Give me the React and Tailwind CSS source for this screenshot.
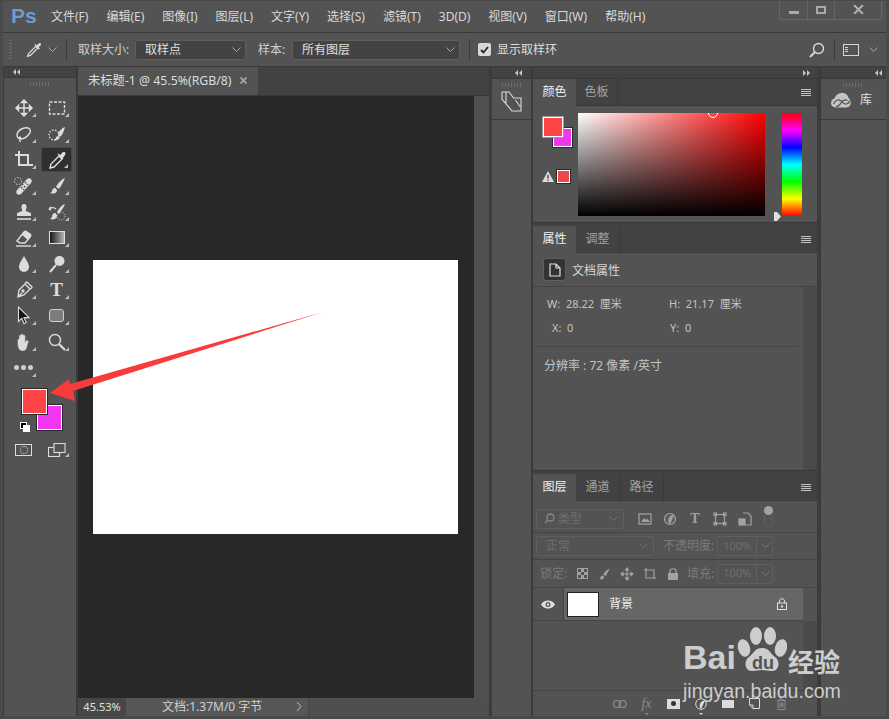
import React from 'react';

const Corner = () => (
  <span className="absolute right-[3px] bottom-[3px] w-0 h-0 border-l-[4px] border-l-transparent border-b-[4px] border-b-[#bdbdbd]" />
);

const Svg = ({ children, size = 20, className = '' }) => (
  <svg width={size} height={size} viewBox="0 0 20 20" fill="none" stroke="#dcdcdc" strokeWidth="1.4" className={className}>
    {children}
  </svg>
);

const Dropper = ({ size = 20 }) => (
  <Svg size={size}>
    <path d="M3 17l1-3 8-8 2 2-8 8z" />
    <path d="M11 4l5 5M13 6l2.5-2.5c1-1 2-.2 1.3.8L14 7z" fill="#dcdcdc" strokeWidth="1.6" />
  </Svg>
);

const tools = [
  [
    <Svg key="m"><path d="M10 2v16M2 10h16M10 2L7.5 4.5h5zM10 18l-2.5-2.5h5zM2 10l2.5-2.5v5zM18 10l-2.5-2.5v5z" fill="#dcdcdc" strokeWidth="1.5" /></Svg>,
    <Svg key="r"><rect x="2.5" y="4" width="15" height="12" strokeDasharray="3 1.5" /></Svg>,
  ],
  [
    <Svg key="l"><path d="M6 15c-3-1-4-4-2-7 2-3 7-5 10-4 3 1 3 4 1 6-2 3-6 5-9 5zM6 15c-1 1 0 2 .5 3M5 13c1 0 2 .5 2 2" /></Svg>,
    <Svg key="q"><circle cx="7" cy="11" r="5" strokeDasharray="1.5 1.5" /><path d="M18 3c-3 1-6 4-7 7 0 2 2 3 3 2 2-2 3-6 4-9z" fill="#dcdcdc" stroke="none" /><path d="M10 12c-1 2-2 3-3 4 2 .5 5 0 6-3z" fill="#dcdcdc" stroke="none" /></Svg>,
  ],
  [
    <Svg key="c"><path d="M1 5h13v11M5 1v14h14" strokeWidth="2" /></Svg>,
    <Svg key="e"><path d="M3 18l1-4 8-8 3 3-8 8zM11 4l5 5" /><path d="M13 6l3-3c1-1 2.5 0 1.5 1.5L15 8z" fill="#dcdcdc" /></Svg>,
  ],
  [
    <Svg key="h"><path d="M3 14L13 3c1-1 3-1 4 0s1 3 0 4L7 18c-1 1-3 1-4 0s-1-3 0-4z" fill="#dcdcdc" stroke="none" /><path d="M8 8l4 4M7 11l3 3M11 6l3 3" stroke="#535353" strokeDasharray="1.5 1.5" strokeWidth="1.6" /><circle cx="4" cy="5" r="3.5" strokeDasharray="1.5 1.5" strokeWidth="1" /></Svg>,
    <Svg key="b"><path d="M18 2c-3 1-7 5-9 9l3 2c2-3 5-8 6-11zM8 12c-2 0-3 2-3 3s-1 2-2 2c2 1 6 1 7-2 0-1-1-3-2-3z" fill="#dcdcdc" stroke="none" /></Svg>,
  ],
  [
    <Svg key="s"><path d="M10 2c2 0 3 2 2.5 4-.5 1-1 2-.5 3 1 1 5 1 5 3v2H3v-2c0-2 4-2 5-3 .5-1 0-2-.5-3C7 4 8 2 10 2z" fill="#dcdcdc" stroke="none" /><path d="M3 17h14" strokeWidth="1.6" /></Svg>,
    <Svg key="hb"><path d="M18 2c-3 1-6 4-8 8l2 2c2-3 5-7 6-10zM8 11c-2 0-3 2-3 4-1 1-1 2-2 2 3 1 7 0 7-3 0-1-1-3-2-3z" fill="#dcdcdc" stroke="none" /><path d="M2 7c3-2 5-2 7 0M2 7l2-2M2 7l2 1" /><circle cx="14" cy="14" r="4" strokeWidth="1" strokeDasharray="1 1.5" /></Svg>,
  ],
  [
    <Svg key="er"><path d="M3 13l7-9c1-1 2-1 3 0l3 2c1 1 1 2 0 3l-5 6H6z" /><path d="M10 4c1-1 2-1 3 0l3 2c1 1 1 2 0 3l-2 3-6-5z" fill="#dcdcdc" stroke="none" /><path d="M2 18h15" /></Svg>,
    <div key="g" className="w-[16px] h-[13px] border border-[#e0e0e0] bg-[linear-gradient(to_right,#1a1a1a,#b5b5b5)]" />,
  ],
  [
    <Svg key="d"><path d="M10 2c2 4 5 7 5 11a5 5 0 0 1-10 0c0-4 3-7 5-11z" fill="#dcdcdc" stroke="none" /></Svg>,
    <Svg key="do"><circle cx="12.5" cy="7" r="5" fill="#dcdcdc" stroke="none" /><path d="M9 11l-6 7" strokeWidth="2" /></Svg>,
  ],
  [
    <Svg key="p"><path d="M4 17l1-7 6-6 5 5-6 6zM4 17l4-4M11 3l2-1 5 5-1 2" /><circle cx="9" cy="11" r="1" /></Svg>,
    <span key="t" className="text-[#dcdcdc] text-[19px] font-bold leading-none font-['Liberation_Serif',serif]">T</span>,
  ],
  [
    <Svg key="a" size={22}><path d="M5 2v13l3-3 2 5 2-1-2-4.5h4.5z" fill="#111" stroke="#dcdcdc" strokeWidth="1" /></Svg>,
    <div key="rr" className="w-[15px] h-[13px] rounded-[3px] border border-[#cfcfcf] bg-[#7c7c7c]" />,
  ],
  [
    <Svg key="ha"><path d="M4 11V8c0-1 1.5-1 1.5 0v2V4c0-1 1.8-1 1.8 0v5V3c0-1 1.8-1 1.8 0v6V4c0-1 1.8-1 1.8 0v7l1.5-2c1-1 2.3 0 1.6 1L12 17c-1 1-2 1.5-3.5 1.5C5 18.5 4 15 4 11z" fill="#dcdcdc" stroke="#dcdcdc" strokeWidth=".6" /></Svg>,
    <Svg key="z"><circle cx="8" cy="8" r="5.5" /><path d="M12 12l6 6" strokeWidth="2.2" /></Svg>,
  ],
];

const ToolCell = ({ children, active }) => (
  <div className={`relative w-[31px] h-[25px] flex items-center justify-center rounded-[2px] ${active ? 'bg-[#2f2f2f] border border-[#474747]' : ''}`}>
    {children}
    <Corner />
  </div>
);

const Grip = ({ className = '' }) => (
  <div className={`h-[4px] bg-[repeating-linear-gradient(to_right,#6e6e6e_0,#6e6e6e_1px,transparent_1px,transparent_3px)] ${className}`} />
);

const Arrows = ({ dir = 'left', className = '' }) => (
  <span className={`flex gap-[1px] ${className}`}>
    {[0, 1].map((i) => (
      <span
        key={i}
        className={`w-0 h-0 border-y-[3px] border-y-transparent ${dir === 'left' ? 'border-r-[3px] border-r-[#c8c8c8]' : 'border-l-[3px] border-l-[#c8c8c8]'}`}
      />
    ))}
  </span>
);

const Chevron = ({ className = '' }) => (
  <svg width="9" height="6" viewBox="0 0 9 6" fill="none" stroke="#a5a5a5" className={className}>
    <path d="M.5 .5l4 4 4-4" />
  </svg>
);

const PanelMenu = () => (
  <div className="ml-auto mr-[6px] w-[10px] flex flex-col gap-[1px]">
    {[0, 1, 2, 3].map((i) => (
      <div key={i} className="h-[1px] bg-[#c4c4c4]" />
    ))}
  </div>
);

const Tabs = ({ items, widths }) => (
  <div className="h-[27px] shrink-0 flex items-center bg-[#424242] border-b border-[#393939]">
    {items.map((t, i) => (
      <div
        key={t}
        style={{ width: widths[i] }}
        className={`h-[27px] flex items-center justify-center text-[12px] ${i === 0 ? 'bg-[#535353] text-[#f0f0f0]' : 'text-[#a2a2a2] border-r border-[#393939]'}`}
      >
        {t}
      </div>
    ))}
    <PanelMenu />
  </div>
);

const Disabled = ({ w, text }) => (
  <div style={{ width: w }} className="h-[20px] flex items-center justify-between rounded-[2px] border border-[#5f5f5f] text-[#6f6f6f] text-[12px]">
    <span className="pl-[9px]">{text}</span>
    <Chevron className="mr-[5px] opacity-40" />
  </div>
);

const PercentBox = () => (
  <div className="ml-[3px] w-[56px] h-[20px] flex items-center rounded-[2px] border border-[#5f5f5f] text-[#6f6f6f] text-[11px]">
    <span className="w-[39px] border-r border-[#5f5f5f] h-full flex items-center justify-center">100%</span>
    <Chevron className="ml-[4px] opacity-40" />
  </div>
);

const Icon16 = ({ children, stroke = '#a2a2a2' }) => (
  <svg width="14" height="14" viewBox="0 0 14 14" fill="none" stroke={stroke} strokeWidth="1.2">
    {children}
  </svg>
);

const FootCell = ({ children }) => (
  <div className="relative w-[27px] h-full flex items-center justify-center">{children}</div>
);

export default function App() {
  const menus = ['文件(F)', '编辑(E)', '图像(I)', '图层(L)', '文字(Y)', '选择(S)', '滤镜(T)', '3D(D)', '视图(V)', '窗口(W)', '帮助(H)'];

  return (
    <div className="relative w-[889px] h-[719px] overflow-hidden bg-[#535353] border-x-[3px] border-t-[1px] border-b-[3px] border-[#4a4a4a] font-['Noto_Sans','Noto_Sans_CJK_SC',sans-serif] text-[#d6d6d6] text-[12px] flex flex-col">
      {/* Title / menu bar */}
      <div className="h-[32px] flex items-start border-b border-[#393939] shrink-0">
        <span className="w-[34px] ml-[8px] mt-[3px] text-[#6d9bcb] text-[21px] font-bold leading-[24px] font-['Liberation_Sans',sans-serif]">Ps</span>
        <div className="ml-[6px] h-[31px] flex items-center gap-[18px] text-[#d9d9d9] whitespace-nowrap">
          {menus.map((m) => (
            <span key={m}>{m}</span>
          ))}
        </div>
        <div className="ml-auto mr-[4px] -mt-[1px] w-[103px] h-[20px] flex border border-t-0 border-[#666] rounded-b-[3px]">
          <div className="w-[28px] flex items-center justify-center border-r border-[#666]">
            <div className="w-[10px] h-[3px] mt-[5px] bg-[#a9a9a9]" />
          </div>
          <div className="w-[27px] flex items-center justify-center border-r border-[#666]">
            <div className="w-[10px] h-[8px] border-2 border-[#a9a9a9]" />
          </div>
          <div className="flex-1 flex items-center justify-center">
            <svg width="11" height="9" viewBox="0 0 11 9" stroke="#b0b0b0" strokeWidth="2"><path d="M1 0l9 9M10 0L1 9" /></svg>
          </div>
        </div>
      </div>

      {/* Options bar */}
      <div className="h-[34px] shrink-0 flex items-center border-b border-[#393939] pl-[6px]">
        <div className="w-[3px] h-[20px] bg-[repeating-linear-gradient(to_bottom,#6e6e6e_0,#6e6e6e_1px,transparent_1px,transparent_3px)]" />
        <div className="ml-[13px]"><Dropper size={18} /></div>
        <Chevron className="ml-[5px]" />
        <div className="ml-[9px] w-[1px] h-[22px] bg-[#3d3d3d]" />
        <span className="ml-[11px] text-[#cfcfcf] whitespace-nowrap w-[57px]">取样大小:</span>
        <div className="w-[111px] h-[20px] flex items-center justify-between rounded-[3px] border border-[#5e5e5e] bg-[#434343]">
          <span className="pl-[9px] text-[#e0e0e0]">取样点</span>
          <Chevron className="mr-[4px]" />
        </div>
        <span className="ml-[12px] text-[#cfcfcf] w-[34px]">样本:</span>
        <div className="w-[168px] h-[20px] flex items-center justify-between rounded-[3px] border border-[#5e5e5e] bg-[#434343]">
          <span className="pl-[9px] text-[#e0e0e0]">所有图层</span>
          <Chevron className="mr-[4px]" />
        </div>
        <div className="ml-[9px] w-[1px] h-[22px] bg-[#3d3d3d]" />
        <div className="ml-[8px] w-[13px] h-[13px] rounded-[2px] bg-[#d8d8d8] flex items-center justify-center">
          <svg width="9" height="8" viewBox="0 0 9 8" fill="none" stroke="#222" strokeWidth="1.8"><path d="M1 4l2.5 2.5L8 1" /></svg>
        </div>
        <span className="ml-[6px] text-[#dedede]">显示取样环</span>
        <div className="ml-auto flex items-center pr-[8px]">
          <svg width="16" height="16" viewBox="0 0 16 16" fill="none" stroke="#d8d8d8" strokeWidth="1.4"><circle cx="9.5" cy="6.5" r="5" /><path d="M6 10l-5 5" strokeWidth="1.8" /></svg>
          <div className="ml-[9px] w-[1px] h-[22px] bg-[#3d3d3d]" />
          <div className="ml-[8px] w-[16px] h-[12px] border border-[#d8d8d8] flex items-center pl-[1px]">
            <div className="w-[3px] h-[6px] bg-[repeating-linear-gradient(to_bottom,#d8d8d8_0,#d8d8d8_1px,transparent_1px,transparent_2px)]" />
          </div>
          <Chevron className="ml-[10px]" />
        </div>
      </div>

      {/* Work area */}
      <div className="flex-1 min-h-0 flex pl-[1px] bg-[#3c3c3c] gap-[1px]">
        {/* Toolbar */}
        <div className="w-[73px] flex flex-col bg-[#535353] border-r border-[#393939] shrink-0">
          <div className="h-[11px] bg-[#424242] border-b border-[#393939] flex items-center pl-[9px]"><Arrows /></div>
          <Grip className="mt-[4px] mx-[26px]" />
          <div className="mt-[9px] flex flex-col">
            {tools.map((row, i) => (
              <div key={i} className="h-[26px] flex pl-[4px] gap-[2px]">
                <ToolCell>{row[0]}</ToolCell>
                <ToolCell active={i === 2}>{row[1]}</ToolCell>
              </div>
            ))}
            <div className="h-[26px] flex pl-[4px]">
              <ToolCell>
                <div className="flex gap-[2px]">
                  {[0, 1, 2].map((i) => <span key={i} className="w-[5px] h-[5px] rounded-full bg-[#cfcfcf]" />)}
                </div>
              </ToolCell>
            </div>
          </div>
          {/* colour swatches */}
          <div className="relative mt-[8px] ml-[18px] w-[40px] h-[48px] shrink-0">
            <div className="absolute left-[15px] top-[16px] w-[25px] h-[25px] bg-[#f037f0] border-[1px] border-white outline outline-1 outline-[#2a2a2a]" />
            <div className="absolute left-0 top-0 w-[25px] h-[25px] bg-[#ff4545] border-[1px] border-white outline outline-1 outline-[#2a2a2a]" />
            <div className="absolute left-[-2px] top-[33px] w-[7px] h-[7px] bg-black border border-white" />
            <div className="absolute left-[1px] top-[36px] w-[7px] h-[7px] bg-white" />
          </div>
          <div className="mt-[3px] flex pl-[4px] gap-[2px]">
            <div className="w-[31px] h-[20px] flex items-center justify-center">
              <div className="w-[17px] h-[12px] border border-[#dcdcdc] flex items-center justify-center">
                <div className="w-[8px] h-[8px] rounded-full border border-dotted border-[#dcdcdc]" />
              </div>
            </div>
            <div className="relative w-[31px] h-[20px] flex items-center justify-center">
              <svg width="18" height="14" viewBox="0 0 18 14" fill="none" stroke="#dcdcdc" strokeWidth="1.1"><rect x=".5" y="4.5" width="11" height="9" /><rect x="6" y=".5" width="11" height="9" fill="#535353" /></svg>
              <Corner />
            </div>
          </div>
        </div>

        {/* Document */}
        <div className="w-[412px] flex flex-col shrink-0 bg-[#535353] border-r border-[#393939]">
          <div className="h-[29px] bg-[#424242] flex shrink-0 border-b border-[#393939]">
            <div className="relative w-[180px] h-[28px] bg-[#535353] flex items-center pl-[10px] text-[12.3px] text-[#dcdcdc] whitespace-nowrap">
              未标题-1 @ 45.5%(RGB/8)
              <svg className="absolute left-[162px] top-[10px]" width="7" height="7" viewBox="0 0 7 7" stroke="#a8a8a8" strokeWidth="1.8"><path d="M.5 .5l6 6M6.5 .5l-6 6" /></svg>
            </div>
          </div>
          <div className="flex-1 min-h-0 flex">
            <div className="w-[396px] bg-[#282828] pl-[15px] pt-[164px]">
              <div className="w-[365px] h-[274px] bg-white" />
            </div>
            <div className="flex-1 bg-[#505050]" />
          </div>
          <div className="h-[18px] shrink-0 flex items-center bg-[#4f4f4f] text-[12px]">
            <div className="w-[48px] h-full flex items-center justify-center bg-[#474747] text-[#e0e0e0] text-[11px]">45.53%</div>
            <div className="w-[183px] h-full flex items-center bg-[#565656] border-r border-[#464646] relative">
              <span className="pl-[36px] text-[#d0d0d0] whitespace-nowrap">文档:1.37M/0 字节</span>
              <span className="absolute right-[6px] top-[3px]">
                <svg width="6" height="11" viewBox="0 0 6 11" fill="none" stroke="#c0c0c0"><path d="M1 1l4 4.5-4 4.5" /></svg>
              </span>
            </div>
          </div>
        </div>

        {/* Collapsed dock */}
        <div className="ml-[1px] w-[40px] shrink-0 flex flex-col bg-[#535353] border-r border-[#393939]">
          <div className="h-[12px] bg-[#424242] border-b border-[#393939] flex items-center justify-end pr-[9px]"><Arrows /></div>
          <div className="h-[41px] border-b border-[#393939] flex flex-col items-center">
            <Grip className="mt-[4px] w-[20px]" />
            <svg className="mt-[4px]" width="22" height="22" viewBox="0 0 22 22" fill="none" stroke="#dcdcdc" strokeWidth="1.1"><path d="M1 1h7l5 6.5M1 1v7l10 12h9v-2M13 7h7v11M14.5 9l4.5 6.5M5 1v11" /></svg>
          </div>
        </div>

        {/* Panels */}
        <div className="w-[284px] shrink-0 flex flex-col bg-[#424242] gap-[3px]">
          <div className="flex flex-col shrink-0">
            <div className="h-[12px] bg-[#424242] border-b border-[#393939] flex items-center justify-end pr-[7px]"><Arrows dir="right" /></div>
            <Tabs items={['颜色', '色板']} widths={[43, 42]} />
            <div className="h-[117px] bg-[#535353] flex pl-[10px] pt-[7px] border-b border-[#393939]">
              <div className="w-[35px] relative">
                <div className="absolute left-[10px] top-[15px] w-[19px] h-[19px] bg-[#f037f0] border border-white outline outline-1 outline-[#2a2a2a]" />
                <div className="absolute left-0 top-[4px] w-[20px] h-[20px] bg-[#ff4545] border border-white outline outline-1 outline-[#999]" />
                <svg className="absolute left-[-1px] top-[58px]" width="12" height="11" viewBox="0 0 12 11"><path d="M6 0l6 11H0z" fill="#dcdcdc" /><path d="M6 4v3.5M6 8.5v1.2" stroke="#333" strokeWidth="1.3" /></svg>
                <div className="absolute left-[14px] top-[57px] w-[13px] h-[13px] bg-[#f04848] border border-white outline outline-1 outline-[#2a2a2a]" />
              </div>
              <div className="relative w-[187px] h-[103px] bg-[linear-gradient(to_top,#000,transparent),linear-gradient(to_right,#fff,#f00)]">
                <div className="absolute left-[130px] top-[-5px] w-[10px] h-[10px] rounded-full border border-white [clip-path:inset(5px_0_0_0)]" />
              </div>
              <div className="relative ml-[17px] w-[20px] h-[103px] bg-[linear-gradient(to_bottom,#f00,#f0f,#00f,#0ff,#0f0,#ff0,#f00)]">
                <svg className="absolute left-[-9px] bottom-[-5px]" width="8" height="9" viewBox="0 0 8 9"><path d="M1 0h3l4 4.5L4 9H1z" fill="#e0e0e0" /></svg>
              </div>
            </div>
          </div>

          <div className="h-[245px] shrink-0 flex flex-col bg-[#535353] border-b border-[#393939]">
            <Tabs items={['属性', '调整']} widths={[43, 44]} />
            <div className="h-[34px] shrink-0 flex items-center pl-[10px] border-b border-[#444]">
              <div className="w-[23px] h-[23px] rounded-[3px] bg-[#333] border border-[#5f5f5f] flex items-center justify-center">
                <svg width="12" height="14" viewBox="0 0 12 14" fill="none" stroke="#e0e0e0" strokeWidth="1.2"><path d="M1 1h6l4 4v8H1zM7 1v4h4" /></svg>
              </div>
              <span className="ml-[6px] mt-[2px] text-[#d6d6d6]">文档属性</span>
            </div>
            <div className="flex-1 flex">
              <div className="w-[270px] text-[11px] text-[#c4c4c4]">
                <div className="mt-[9px] flex h-[16px] items-center">
                  <span className="w-[136px] pl-[14px] whitespace-nowrap">W:&nbsp;&nbsp;28.22&nbsp;&nbsp;厘米</span>
                  <span className="whitespace-nowrap">H:&nbsp;&nbsp;21.17&nbsp;&nbsp;厘米</span>
                </div>
                <div className="mt-[8px] flex h-[16px] items-center">
                  <span className="w-[137px] pl-[19px] whitespace-nowrap">X:&nbsp;&nbsp;0</span>
                  <span className="whitespace-nowrap">Y:&nbsp;&nbsp;0</span>
                </div>
                <div className="mt-[10px] ml-[4px] h-[1px] bg-[#444] w-[261px]" />
                <div className="mt-[10px] pl-[11px] text-[12px] whitespace-nowrap">分辨率 : 72 像素 /英寸</div>
              </div>
              <div className="flex-1 bg-[#4a4a4a]" />
            </div>
          </div>

          <div className="flex-1 min-h-0 flex flex-col bg-[#535353]">
            <Tabs items={['图层', '通道', '路径']} widths={[43, 44, 44]} />
            <div className="h-[32px] flex items-center pl-[3px] pt-[4px] border-b border-[#444] shrink-0">
              <div className="w-[88px] h-[20px] flex items-center justify-between rounded-[3px] border border-[#5f5f5f] text-[#6f6f6f]">
                <span className="pl-[7px] flex items-center gap-[3px]">
                  <svg width="11" height="11" viewBox="0 0 11 11" fill="none" stroke="#8a8a8a" strokeWidth="1.3"><circle cx="6.5" cy="4.5" r="3.5" /><path d="M4 7l-3 3" /></svg>
                  类型
                </span>
                <Chevron className="mr-[5px] opacity-40" />
              </div>
              <div className="ml-[14px] flex items-center gap-[11px]">
                <Icon16><rect x="1" y="2" width="12" height="10" /><path d="M3 10l3-4 2 2 1.5-1.5L12 10z" fill="#a2a2a2" stroke="none" /></Icon16>
                <Icon16><circle cx="7" cy="7" r="5.5" fill="#5c5c5c" /><path d="M7 12.5A5.5 5.5 0 0 1 11 3z" fill="#a2a2a2" stroke="none" /></Icon16>
                <span className="w-[14px] text-center text-[#a2a2a2] text-[14px] font-bold leading-none font-['Liberation_Serif',serif]">T</span>
                <Icon16><rect x="2.5" y="2.5" width="9" height="9" /><rect x="1" y="1" width="2.5" height="2.5" /><rect x="10.5" y="1" width="2.5" height="2.5" /><rect x="1" y="10.5" width="2.5" height="2.5" /><rect x="10.5" y="10.5" width="2.5" height="2.5" /></Icon16>
                <Icon16><path d="M5 1h5l3 3v9H7" /><rect x="1" y="7" width="6" height="6" fill="#a2a2a2" /></Icon16>
              </div>
              <div className="relative ml-[12px] w-[9px] h-[18px] rounded-full border border-[#5f5f5f]">
                <div className="absolute -left-[1px] -top-[5px] w-[9px] h-[9px] rounded-full bg-[#a2a2a2]" />
              </div>
            </div>
            <div className="h-[27px] flex items-center pl-[3px] border-b border-[#444] shrink-0">
              <Disabled w={118} text="正常" />
              <span className="ml-[9px] text-[#7a7a7a] whitespace-nowrap">不透明度:</span>
              <PercentBox />
            </div>
            <div className="h-[28px] flex items-center pl-[7px] border-b border-[#444] shrink-0 text-[#7a7a7a]">
              <span className="w-[32px] text-[12px] whitespace-nowrap">锁定:</span>
              <div className="ml-[5px] flex items-center gap-[9px]">
                <div className="w-[11px] h-[11px] border border-[#a2a2a2] bg-[conic-gradient(#a2a2a2_25%,#535353_0_50%,#a2a2a2_0_75%,#535353_0)] bg-[length:6px_6px]" />
                <Svg size={14}><path d="M18 2c-3 1-7 5-9 9l3 2c2-3 5-8 6-11zM8 12c-2 0-3 2-3 3s-1 2-2 2c2 1 6 1 7-2 0-1-1-3-2-3z" fill="#a2a2a2" stroke="none" /></Svg>
                <Icon16><path d="M7 1v12M1 7h12M7 1L5.5 3h3zM7 13l-1.5-2h3zM1 7l2-1.5v3zM13 7l-2-1.5v3z" fill="#a2a2a2" /></Icon16>
                <Icon16><path d="M1 3h10v9M3 1v10h10" /></Icon16>
                <Icon16><rect x="2" y="6" width="10" height="7" fill="#a2a2a2" stroke="none" /><path d="M4 6V4c0-3 6-3 6 0v2" /></Icon16>
              </div>
              <span className="ml-[7px] whitespace-nowrap">填充:</span>
              <PercentBox />
            </div>
            <div className="h-[33px] flex items-stretch border-b border-[#444] shrink-0 w-[270px]">
              <div className="w-[31px] flex items-center justify-center border-r border-[#444]">
                <svg width="14" height="9" viewBox="0 0 14 9"><path d="M0 4.5C3 -1 11 -1 14 4.5 11 10 3 10 0 4.5z" fill="#e0e0e0" /><circle cx="7" cy="4.5" r="2.5" fill="#535353" /><circle cx="7" cy="4.5" r="1.2" fill="#e0e0e0" /></svg>
              </div>
              <div className="flex-1 bg-[#666] flex items-center pl-[3px]">
                <div className="w-[32px] h-[25px] bg-white border border-[#222]" />
                <span className="ml-[10px] text-[#f0f0f0]">背景</span>
                <svg className="ml-auto mr-[16px]" width="10" height="12" viewBox="0 0 10 12" fill="none" stroke="#e0e0e0"><rect x=".5" y="5" width="9" height="6.5" /><path d="M2.5 5V3c0-3 5-3 5 0v2" /><rect x="4" y="7.5" width="2" height="2" fill="#e0e0e0" stroke="none" /></svg>
              </div>
            </div>
            <div className="flex-1 flex">
              <div className="w-[270px]" />
              <div className="flex-1 bg-[#4a4a4a]" />
            </div>
            <div className="h-[26px] shrink-0 border-t border-[#444] flex items-center pl-[73px]">
              <FootCell><svg width="14" height="8" viewBox="0 0 14 8" fill="none" stroke="#8a8a8a" strokeWidth="1.2"><rect x=".6" y=".6" width="7" height="6.8" rx="3" /><rect x="6" y=".6" width="7" height="6.8" rx="3" /></svg></FootCell>
              <FootCell>
                <span className="text-[#8a8a8a] text-[14px] italic font-['Liberation_Serif',serif]">fx</span>
                <span className="absolute left-[12px] bottom-[1px] w-0 h-0 border-x-[2px] border-x-transparent border-t-[2px] border-t-[#8a8a8a]" />
              </FootCell>
              <FootCell><div className="w-[13px] h-[10px] bg-[#dcdcdc] flex items-center justify-center"><div className="w-[5px] h-[5px] rounded-full bg-[#333]" /></div></FootCell>
              <FootCell>
                <svg width="12" height="12" viewBox="0 0 12 12"><circle cx="6" cy="6" r="5.3" fill="#535353" stroke="#dcdcdc" /><path d="M6 11.3A5.3 5.3 0 0 1 10 2.5z" fill="#dcdcdc" /></svg>
                <span className="absolute left-[12px] bottom-[1px] w-0 h-0 border-x-[2px] border-x-transparent border-t-[2px] border-t-[#dcdcdc]" />
              </FootCell>
              <FootCell><div className="w-[12px] h-[8px] bg-[#dcdcdc]" /></FootCell>
              <FootCell><svg width="11" height="11" viewBox="0 0 11 11" fill="none" stroke="#dcdcdc"><path d="M.5 .5h10v10H4L.5 7zM.5 7H4v3.5" /></svg></FootCell>
              <FootCell><svg width="11" height="12" viewBox="0 0 11 12" fill="none" stroke="#8a8a8a"><path d="M1 2.5h9M4 2.5V1h3v1.5M2 2.5v9h7v-9M4 4.5v5M5.5 4.5v5M7 4.5v5" /></svg></FootCell>
            </div>
          </div>
        </div>

        {/* Library dock */}
        <div className="flex-1 flex flex-col bg-[#535353] ml-[2px] border-l border-[#393939]">
          <div className="h-[12px] bg-[#424242] border-b border-[#393939] flex items-center justify-end pr-[4px]"><Arrows /></div>
          <div className="h-[41px] border-b border-[#393939] flex flex-col">
            <Grip className="mt-[4px] mx-[22px]" />
            <div className="mt-[4px] flex items-center pl-[9px]">
              <svg width="22" height="16" viewBox="0 0 22 16" fill="none">
                <path d="M5.5 15.5C0 15.5-.5 8 4.5 6.5 6 2 10 .5 13.5 1c3 .5 4.5 2.500 5 5 3.500 2 3 9.500-2 9.500z" fill="#c4c4c4" />
                <path d="M3.5 12c1.5-4 5-5 7-3.5s3 4 6 3.500c2-.5 3-2 3-3.500M6 14.500c3 0 4-2 5-3.500 2-3 4-4 6.500-2.500" stroke="#535353" strokeWidth="1.2" />
              </svg>
              <span className="ml-[8px] text-[#e0e0e0]">库</span>
            </div>
          </div>
        </div>
      </div>

      {/* Red arrow annotation */}
      <svg className="absolute left-[-3px] top-[-1px] pointer-events-none" width="889" height="719" viewBox="0 0 889 719">
        <polygon points="50,393 69,379 70,384 323,312 73,391 75,401" fill="#f83c3c" />
      </svg>

      {/* Baidu watermark */}
      <div className="absolute left-[680px] top-[623px] w-[165px] h-[80px] pointer-events-none text-[#cdcdcd] font-['Liberation_Sans',sans-serif]">
        <span className="absolute left-0 top-[13px] text-[34px] font-bold leading-[40px]">Bai</span>
        <svg className="absolute left-[54px] top-[2px]" width="50" height="50" viewBox="0 0 50 50" fill="#cdcdcd">
          <ellipse cx="7" cy="22" rx="6" ry="9" transform="rotate(-15 7 22)" />
          <ellipse cx="19" cy="10" rx="6" ry="9" />
          <ellipse cx="33" cy="10" rx="6" ry="9" />
          <ellipse cx="44" cy="22" rx="6" ry="9" transform="rotate(15 44 22)" />
          <path d="M25 22c7 0 8 5 13 9 5 3 5 14-3 14-4 0-7-1-10-1s-6 1-10 1C7 45 7 34 12 31c5-4 6-9 13-9z" />
        </svg>
        <span className="absolute left-[69px] top-[29px] text-[18px] font-bold leading-[20px] text-[#535353]">du</span>
        <span className="absolute left-[105px] top-[22px] text-[26px] font-bold leading-[30px] font-['Noto_Sans_CJK_SC',sans-serif] whitespace-nowrap">经验</span>
        <span className="absolute left-0 top-[55px] text-[19.6px] leading-[24px] whitespace-nowrap">jingyan.baidu.com</span>
      </div>
    </div>
  );
}
